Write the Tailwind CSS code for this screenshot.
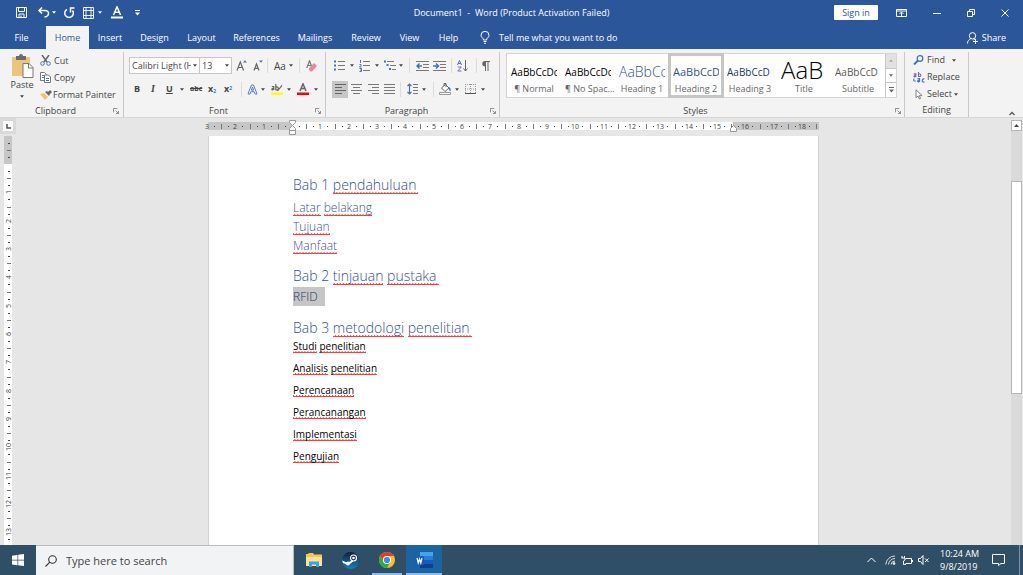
<!DOCTYPE html>
<html lang="en">
<head>
    <meta charset="UTF-8">
    <meta name="viewport" content="width=device-width, initial-scale=1.0">
    <script src="https://cdn.jsdelivr.net/npm/@tailwindcss/browser@4"></script>
    <title>Document1 - Word</title>
</head>
<body class="flex flex-col h-screen overflow-hidden bg-[#e6e6e6] font-['Open_Sans',sans-serif] text-[9px] leading-3 text-[#444]">
    <!-- Shared symbols -->
    <svg class="hidden">
        <symbol id="caret" viewBox="0 0 5 3"><path d="M0 0h5L2.500 3z" fill="currentColor"/></symbol>
        <symbol id="launcher" viewBox="0 0 7 7"><path d="M.5 5V.5H5M3 3l3 3M6.500 3.500v3h-3" fill="none" stroke="#777"/></symbol>
    </svg>

    <!-- Title bar -->
    <header class="grid grid-cols-[1fr_auto_1fr] items-center h-[25px] shrink-0 bg-[#2b579a] text-white">
        <div class="flex items-center pl-4">
            <button aria-label="Save" class="w-[22px]"><svg class="w-[11px] h-[11px]" viewBox="0 0 11 11" fill="none" stroke="#fff"><path d="M.5.5h10v10H.5zM2.500.5v4h6v-4M3 10.500v-3.500h5v3.500M5 8.500v1.500"/></svg></button>
            <button aria-label="Undo" class="w-[14px]"><svg class="w-3 h-[11px]" viewBox="0 0 12 11" fill="none" stroke="#fff" stroke-width="1.500"><path d="M4 .5L1 3.500l3 3M1 3.500h6c5 0 4.500 6-.5 6.500"/></svg></button>
            <svg class="w-1 h-[3px]"><use href="#caret"/></svg>
            <button aria-label="Redo" class="ml-[7px] w-[20px]"><svg class="w-[12px] h-[12px]" viewBox="0 0 12 12" fill="none" stroke="#fff" stroke-width="1.500"><path d="M4 2.300A4.300 4.300 0 1 0 9.500 3.500M11.500 1H7.500v4.500"/></svg></button>
            <button aria-label="Grid" class="w-[15px]"><svg class="w-[11px] h-[12px]" viewBox="0 0 11 12" fill="none" stroke="#fff" stroke-width=".9"><path d="M.5.5h10v11H.5zM3 0v12M8 0v12M0 3.500h11M0 8.500h11"/></svg></button>
            <svg class="w-1 h-[3px]"><use href="#caret"/></svg>
            <button aria-label="Font color" class="ml-[9px] w-[24px]"><svg class="w-3 h-[13px]" viewBox="0 0 12 13" fill="none" stroke="#fff"><path d="M2.500 9L6 .8 9.500 9M3.700 6.200h4.600" stroke-width="1.500"/><path d="M0 11.500h12" stroke-width="2"/></svg></button>
            <button aria-label="Customize toolbar"><svg class="w-[5px] h-[6px]" viewBox="0 0 5 6"><path d="M0 0h5v1H0zM0 2.500h5L2.500 5.500z" fill="#fff"/></svg></button>
        </div>
        <h1 class="whitespace-pre">Document1  -  Word (Product Activation Failed)</h1>
        <div class="flex items-center justify-end pr-[14px]">
            <button class="w-11 h-[15px] mr-[18px] rounded-[1px] bg-white text-[#2b579a]">Sign in</button>
            <button aria-label="Ribbon options" class="mr-[26px]"><svg class="w-[11px] h-2" viewBox="0 0 11 8" fill="none" stroke="#fff"><path d="M.5.5h10v7H.5zM.5 2h10M5.500 7V3.500M3.500 5l2-2 2 2"/></svg></button>
            <button aria-label="Minimize" class="mr-[26px]"><svg class="w-2 h-2" viewBox="0 0 8 8"><path d="M0 4.500h8" stroke="#fff"/></svg></button>
            <button aria-label="Restore" class="mr-[26px]"><svg class="w-2 h-2" viewBox="0 0 8 8" fill="none" stroke="#fff"><path d="M.5 2.500h5v5h-5zM2.500 2V.5h5v5H6"/></svg></button>
            <button aria-label="Close"><svg class="w-2 h-2" viewBox="0 0 8 8"><path d="M.5.5l7 7M7.500.5l-7 7" stroke="#fff"/></svg></button>
        </div>
    </header>

    <!-- Tabs -->
    <nav class="flex h-6 shrink-0 pt-px bg-[#2b579a] text-white">
        <button class="w-[46px] pr-[3px]">File</button>
        <button class="w-[43px] bg-[#f3f3f3] text-[#2b579a]">Home</button>
        <button class="w-[42px]">Insert</button>
        <button class="w-[47px]">Design</button>
        <button class="w-[47px]">Layout</button>
        <button class="w-[63px]">References</button>
        <button class="w-[54px]">Mailings</button>
        <button class="w-[48px]">Review</button>
        <button class="w-[39px]">View</button>
        <button class="w-[39px]">Help</button>
        <button class="flex items-center gap-[9px] ml-3">
            <svg class="w-[10px] h-[13px]" viewBox="0 0 10 13" fill="none" stroke="#fff"><path d="M3.500 9C3.500 7 1 6.500 1 4.300a4 4 0 0 1 8 0C9 6.500 6.500 7 6.500 9zM3.500 10.500h3M4 12.300h2"/></svg>
            Tell me what you want to do
        </button>
        <button class="flex items-center gap-1 ml-auto pr-[17px]">
            <svg class="w-[11px] h-[12px]" viewBox="0 0 11 12" fill="none" stroke="#fff"><circle cx="5.500" cy="3.800" r="3.200"/><path d="M.5 11.500c0-2.500 1.500-4 3.200-4.700M8 6.800l-1.500 1.500M6 9.500h5M8.500 7v5"/></svg>
            Share
        </button>
    </nav>

    <!-- Ribbon -->
    <section class="flex h-[69px] shrink-0 pt-[3px] border-b border-[#d5d5d5] bg-[#f3f3f3]">
        <!-- Clipboard -->
        <div class="flex flex-col w-[124px] border-r border-[#c8c8c8]">
            <div class="flex flex-1">
                <button class="flex flex-col items-center w-[26px] ml-[9px]">
                    <svg class="w-[23px] h-6 mt-[2px]" viewBox="0 0 23 24"><path d="M1 3h18v19H1z" fill="#ecc57c"/><path d="M5 2h3a2 2 0 0 1 4 0h3v4H5z" fill="#6b6b6b"/><path d="M12 9.500h6l4 4v10H12z" fill="#fff" stroke="#777"/><path d="M17.500 9.500v4.500H22" fill="none" stroke="#777"/></svg>
                    <span class="mt-px">Paste</span>
                    <svg class="w-1 h-[3px] mt-1"><use href="#caret"/></svg>
                </button>
                <div class="flex flex-col ml-[5px]">
                    <button class="flex items-center gap-[3px] h-[17px]">
                        <svg class="w-[11px] h-[11px]" viewBox="0 0 11 11" fill="none"><path d="M2 0l5 7M9 0L4 7" stroke="#666" stroke-width="1.500"/><circle cx="2.500" cy="8.500" r="1.800" stroke="#4472b8"/><circle cx="8.500" cy="8.500" r="1.800" stroke="#4472b8"/></svg>Cut
                    </button>
                    <button class="flex items-center gap-[3px] h-[17px]">
                        <svg class="w-[11px] h-[11px]" viewBox="0 0 11 11" fill="#fff" stroke="#777"><path d="M.5.5h4l2 2v6h-6z"/><path d="M4.500 3h4l2 2v5.500h-6z"/><path d="M2 3.500h2M2 5.500h2M6 6.500h3M6 8.500h3" stroke="#4472b8"/></svg>Copy
                    </button>
                    <button class="flex items-center gap-px h-[17px] whitespace-nowrap">
                        <svg class="w-3 h-[10px]" viewBox="0 0 12 10"><path d="M0 4l4-1 4 4-3 3z" fill="#ecc57c"/><path d="M5 2l4 4 1-2 2-2-2-2-2 2-1-1z" fill="#666"/></svg>Format Painter
                    </button>
                </div>
            </div>
            <div class="flex items-center h-[13px] pr-1"><span class="flex-1 text-center pr-[2px]">Clipboard</span><button aria-label="Clipboard settings"><svg class="w-[6px] h-[6px]"><use href="#launcher"/></svg></button></div>
        </div>
        <!-- Font -->
        <div class="flex flex-col w-[202px] border-r border-[#c8c8c8] pl-[5px]">
            <div class="flex items-center h-[27px]">
                <div class="relative">
                    <input aria-label="Font name" value="Calibri Light (H" class="w-[71px] h-[17px] pl-[2px] pr-[8px] border border-[#c6c6c6] bg-white">
                    <svg class="absolute right-[3px] top-[7px] w-1 h-[3px]"><use href="#caret"/></svg>
                </div>
                <div class="relative">
                    <input aria-label="Font size" value="13" class="w-8 h-[17px] pl-[2px] border border-l-0 border-[#c6c6c6] bg-white">
                    <svg class="absolute right-[3px] top-[7px] w-1 h-[3px]"><use href="#caret"/></svg>
                </div>
                <button aria-label="Grow font" class="ml-1 w-[17px]"><svg class="w-[11px] h-[11px]" viewBox="0 0 11 11" fill="none"><path d="M1 10.500L4.300 2l3.300 8.500M2.200 7.500h4.200" stroke="#666" stroke-width="1.200"/><path d="M7 2.500L9 .3l2 2.200z" fill="#4472b8"/></svg></button>
                <button aria-label="Shrink font" class="w-[14px]"><svg class="w-[10px] h-[11px]" viewBox="0 0 10 11" fill="none"><path d="M1 10.500l2.500-6.500L6 10.500M2 8.300h3" stroke="#666" stroke-width="1.200"/><path d="M6 .5h4L8 2.700z" fill="#4472b8"/></svg></button>
                <span class="w-px h-[15px] bg-[#dcdcdc] mr-[6px]"></span>
                <button class="flex items-center gap-[3px] text-[10px]">Aa<svg class="w-1 h-[3px]"><use href="#caret"/></svg></button>
                <span class="w-px h-[15px] bg-[#dcdcdc] mx-[6px]"></span>
                <button aria-label="Clear formatting"><svg class="w-[11px] h-3" viewBox="0 0 11 12"><path d="M.8 8L3.500.8 6.200 8M1.800 5.500h3.400" fill="none" stroke="#777" stroke-width="1.200"/><path d="M3 8l5-5 3 3-5 5.500H4.500L3 10z" fill="#e8899a"/></svg></button>
            </div>
            <div class="flex items-center h-5 pl-[5px]">
                <button class="w-[17px] text-left font-bold">B</button>
                <button class="w-[15px] text-left font-bold italic font-['Liberation_Serif',serif] text-[10px]">I</button>
                <button class="w-[14px] text-left font-bold underline">U</button>
                <svg class="w-1 h-[3px]"><use href="#caret"/></svg>
                <button class="ml-[6px] w-[18px] text-left line-through font-bold text-[7px]">abc</button>
                <button class="w-4 text-left font-bold">x<sub class="text-[5px] text-[#4472b8]">2</sub></button>
                <button class="w-3 text-left font-bold">x<sup class="text-[5px] text-[#4472b8]">2</sup></button>
                <span class="w-px h-[15px] bg-[#dcdcdc] mx-[5px]"></span>
                <button aria-label="Text effects" class="w-[14px]"><svg class="w-[11px] h-[11px]" viewBox="0 0 11 11"><path d="M1 10L4.500 1h2L10 10H8L7.200 7.700H3.800L3 10zM4.300 6.200h2.400L5.500 3z" fill="#fff" stroke="#4472b8" stroke-width=".9"/></svg></button>
                <svg class="w-1 h-[3px]"><use href="#caret"/></svg>
                <button aria-label="Highlight" class="ml-[6px] w-[16px]"><svg class="w-3 h-[13px]" viewBox="0 0 12 13"><path d="M0 9.500h12V12H0z" fill="#ff0"/><path d="M.8 3.500h2V7M2.800 5C.5 5 .5 7 1.500 7l1.300-.8M4.800 1v6h1c2 0 2-3.200 0-3.200h-1M6.500 8L11 2.300" fill="none" stroke="#666" stroke-width="1.200"/></svg></button>
                <svg class="w-1 h-[3px]"><use href="#caret"/></svg>
                <button aria-label="Font color" class="ml-[6px] w-[17px]"><svg class="w-3 h-[13px]" viewBox="0 0 12 13"><path d="M3 8L6 .8 9 8M4 5.500h4" fill="none" stroke="#666" stroke-width="1.500"/><path d="M0 9.500h12V12H0z" fill="#f00"/></svg></button>
                <svg class="w-1 h-[3px]"><use href="#caret"/></svg>
            </div>
            <div class="flex items-center h-[13px] mt-auto pr-1"><span class="flex-1 text-center pr-[7px]">Font</span><button aria-label="Font settings"><svg class="w-[6px] h-[6px]"><use href="#launcher"/></svg></button></div>
        </div>
        <!-- Paragraph -->
        <div class="flex flex-col w-[174px] border-r border-[#c8c8c8] pl-[6px]">
            <div class="flex items-center h-[27px] pl-[2px]">
                <button aria-label="Bullets" class="w-4"><svg class="w-[11px] h-[11px]" viewBox="0 0 11 11"><path d="M0 1.500h2M0 5.500h2M0 9.500h2" stroke="#4472b8" stroke-width="2"/><path d="M4 1.500h7M4 5.500h7M4 9.500h7" stroke="#777"/></svg></button>
                <svg class="w-1 h-[3px]"><use href="#caret"/></svg>
                <button aria-label="Numbering" class="ml-[5px] w-4"><svg class="w-[11px] h-[12px]" viewBox="0 0 11 12"><path d="M1.500 0v3M.5 4.500h1.500v1L.5 7h2M.5 8.500h2v3h-2M1 10h1.500" fill="none" stroke="#4472b8"/><path d="M4 1.500h7M4 5.500h7M4 10.500h7" stroke="#777"/></svg></button>
                <svg class="w-1 h-[3px]"><use href="#caret"/></svg>
                <button aria-label="Multilevel list" class="ml-[5px] w-[15px]"><svg class="w-3 h-[11px]" viewBox="0 0 12 11"><path d="M0 1.500h2M2.500 5h2M5 9h2" stroke="#4472b8" stroke-width="2"/><path d="M3 1.500h7M6 5.500h6M8 9.500h4" stroke="#777"/></svg></button>
                <svg class="w-1 h-[3px]"><use href="#caret"/></svg>
                <span class="w-px h-[15px] bg-[#dcdcdc] mx-[6px]"></span>
                <button aria-label="Decrease indent" class="w-[17px]"><svg class="w-[13px] h-[10px]" viewBox="0 0 13 10"><path d="M0 .5h13M7 3.500h6M7 6.500h6M0 9.500h13" stroke="#777"/><path d="M6 5H1.500M3.500 2.500L1 5l2.500 2.500" fill="none" stroke="#4472b8" stroke-width="1.500"/></svg></button>
                <button aria-label="Increase indent" class="w-[13px]"><svg class="w-[13px] h-[10px]" viewBox="0 0 13 10"><path d="M0 .5h13M7 3.500h6M7 6.500h6M0 9.500h13" stroke="#777"/><path d="M0 5h4.500M3 2.500L5.500 5 3 7.500" fill="none" stroke="#4472b8" stroke-width="1.500"/></svg></button>
                <span class="w-px h-[15px] bg-[#dcdcdc] mx-[5px]"></span>
                <button aria-label="Sort" class="w-[14px]"><svg class="w-3 h-3" viewBox="0 0 12 12" fill="none"><path d="M.5 5L2.500.5 4.500 5M1.200 3.500h2.600" stroke="#4472b8"/><path d="M.8 7h3.500L.8 11h3.700" stroke="#8764b8"/><path d="M8.500 0v11M6.500 8.500l2 2.500 2-2.500" stroke="#666"/></svg></button>
                <span class="w-px h-[15px] bg-[#dcdcdc] mx-[5px]"></span>
                <button aria-label="Show marks"><svg class="w-2 h-[10px]" viewBox="0 0 8 10"><path d="M8 0H3a2.600 2.600 0 0 0 0 5.400V10h1V1h1.500v9h1V1H8z" fill="#666"/></svg></button>
            </div>
            <div class="flex items-center h-5">
                <button aria-label="Align left" class="flex items-center justify-center w-4 h-[17px] bg-[#c6c6c6]"><svg class="w-[11px] h-[10px]" viewBox="0 0 11 10"><path d="M0 .5h11M0 3.500h7M0 6.500h11M0 9.500h7" stroke="#666"/></svg></button>
                <button aria-label="Center" class="flex justify-center w-[17px]"><svg class="w-[11px] h-[10px]" viewBox="0 0 11 10"><path d="M0 .5h11M2 3.500h7M0 6.500h11M2 9.500h7" stroke="#777"/></svg></button>
                <button aria-label="Align right" class="flex justify-center w-4"><svg class="w-[11px] h-[10px]" viewBox="0 0 11 10"><path d="M0 .5h11M4 3.500h7M0 6.500h11M4 9.500h7" stroke="#777"/></svg></button>
                <button aria-label="Justify" class="flex justify-center w-4"><svg class="w-[11px] h-[10px]" viewBox="0 0 11 10"><path d="M0 .5h11M0 3.500h11M0 6.500h11M0 9.500h11" stroke="#777"/></svg></button>
                <span class="w-px h-[15px] bg-[#dcdcdc] ml-[3px] mr-[6px]"></span>
                <button aria-label="Line spacing" class="w-[15px]"><svg class="w-[11px] h-3" viewBox="0 0 11 12" fill="none"><path d="M2.500 1v10M.5 3l2-2 2 2M.5 9l2 2 2-2" stroke="#4472b8" stroke-width="1.200"/><path d="M6 1.500h5M6 4.500h5M6 7.500h5M6 10.500h5" stroke="#777"/></svg></button>
                <svg class="w-1 h-[3px]"><use href="#caret"/></svg>
                <span class="w-px h-[15px] bg-[#dcdcdc] ml-[7px] mr-[5px]"></span>
                <button aria-label="Shading" class="w-4"><svg class="w-3 h-3" viewBox="0 0 12 12" fill="none"><path d="M2.500 5l4-3.500L10 5 6 8.500zM5 3V.5h2V4" fill="#fff" stroke="#666"/><path d="M9.500 4c2 .5 2.500 2 2 4.500L10 7z" fill="#4472b8"/><path d="M.5 9.500h11v2H.5z" fill="#fff" stroke="#999"/></svg></button>
                <svg class="w-1 h-[3px]"><use href="#caret"/></svg>
                <button aria-label="Borders" class="ml-[6px] w-4"><svg class="w-[11px] h-[10px]" viewBox="0 0 11 10" fill="none"><path d="M.5 0v10M5.500 0v10M10.500 0v10M0 .5h11M0 5h11" stroke="#999" stroke-dasharray="1 1"/><path d="M0 9.500h11" stroke="#555"/></svg></button>
                <svg class="w-1 h-[3px]"><use href="#caret"/></svg>
            </div>
            <div class="flex items-center h-[13px] mt-auto pr-[3px]"><span class="flex-1 text-center pr-[9px]">Paragraph</span><button aria-label="Paragraph settings"><svg class="w-[6px] h-[6px]"><use href="#launcher"/></svg></button></div>
        </div>
        <!-- Styles -->
        <div class="flex flex-col w-[405px] border-r border-[#c8c8c8] pl-[6px]">
            <div class="flex w-[391px] h-[45px] mt-px border border-[#d5d5d5] bg-white text-[#666] whitespace-nowrap">
                <button class="w-[54px] px-1"><span class="flex items-center h-[27px] pt-1 overflow-hidden text-[10px] text-black">AaBbCcDc</span>¶ Normal</button>
                <button class="w-[54px] px-1"><span class="flex items-center h-[27px] pt-1 overflow-hidden text-[10px] text-black">AaBbCcDc</span>¶ No Spac...</button>
                <button class="w-[54px] px-1"><span class="flex items-center h-[27px] pt-1 overflow-hidden text-[14px] text-[#2f5496] font-light">AaBbCc</span>Heading 1</button>
                <button class="w-[54px] outline-3 -outline-offset-2 outline-[#c6c6c6] px-1"><span class="flex items-center h-[27px] pt-1 overflow-hidden text-[11px] text-[#2f5496]">AaBbCcD</span>Heading 2</button>
                <button class="w-[54px] px-1"><span class="flex items-center h-[27px] pt-1 overflow-hidden text-[10px] text-[#1f3763]">AaBbCcD</span>Heading 3</button>
                <button class="w-[54px] px-1"><span class="flex items-center h-[27px] overflow-hidden text-[24px] leading-[27px] text-black font-light">AaB</span>Title</button>
                <button class="w-[54px] px-1"><span class="flex items-center h-[27px] pt-1 overflow-hidden text-[10px] text-[#5a5a5a]">AaBbCcD</span>Subtitle</button>
                <div class="flex flex-col flex-1 border-l border-[#c6c6c6]">
                    <button aria-label="Styles up" class="flex items-center justify-center flex-1 bg-[#e1e1e1] text-[#aaa]"><svg class="w-1 h-[3px] rotate-180"><use href="#caret"/></svg></button>
                    <button aria-label="Styles down" class="flex items-center justify-center flex-1 border-y border-[#c6c6c6]"><svg class="w-1 h-[3px]"><use href="#caret"/></svg></button>
                    <button aria-label="More styles" class="flex items-center justify-center flex-1"><svg class="w-[5px] h-[6px]" viewBox="0 0 5 6"><path d="M0 0h5v1H0zM0 2.500h5L2.500 5.500z" fill="#666"/></svg></button>
                </div>
            </div>
            <div class="flex items-center h-[13px] mt-auto pr-[3px]"><span class="flex-1 text-center pr-[10px]">Styles</span><button aria-label="Styles settings"><svg class="w-[6px] h-[6px]"><use href="#launcher"/></svg></button></div>
        </div>
        <!-- Editing -->
        <div class="flex flex-col w-[64px] border-r border-[#c8c8c8] pl-2">
            <div class="flex flex-col pt-px">
                <button class="flex items-center gap-[3px] h-[14px]"><svg class="w-[11px] h-[10px]" viewBox="0 0 11 10" fill="none" stroke="#4472b8"><circle cx="7" cy="3.500" r="2.800" stroke-width="1.300"/><path d="M5 5.500L1 9.500" stroke-width="2"/></svg>Find<svg class="w-1 h-[3px] ml-1"><use href="#caret"/></svg></button>
                <button class="flex items-center gap-[2px] h-[20px]"><svg class="w-3 h-[11px]" viewBox="0 0 12 11" fill="none"><path d="M.8 1.800h2V5M2.800 3.200c-2.200 0-2.200 1.800-1 1.800l1-.8M5.500 0v4.500h1.200c1.500 0 1.500-2.500 0-2.500H5.500" stroke="#8764b8" stroke-width="1.200"/><path d="M4.500 6.700h2V10M6.500 8c-2.200 0-2.200 2-1 2l1-.8M11.500 7C8.500 6 8.500 11 11.500 10" stroke="#4472b8" stroke-width="1.200"/><path d="M.8 6.500v2.500h2" stroke="#4472b8"/></svg>Replace</button>
                <button class="flex items-center gap-1 h-[14px] pl-[2px]"><svg class="w-2 h-[11px]" viewBox="0 0 8 11"><path d="M1 .8v8l2-1.800 1.300 3 1.200-.5L4.300 6.600h2.800z" fill="#fff" stroke="#777" stroke-width=".9"/></svg>Select<svg class="w-1 h-[3px] -ml-[2px]"><use href="#caret"/></svg></button>
            </div>
            <span class="h-[13px] mt-auto text-center pr-[8px]">Editing</span>
        </div>
        <button aria-label="Collapse ribbon" class="ml-auto mt-auto mb-px mr-2"><svg class="w-[6px] h-[5px]" viewBox="0 0 6 5"><path d="M.5 4L3 1.500 5.500 4" fill="none" stroke="#555" stroke-width="1.300"/></svg></button>
    </section>

    <!-- Work area -->
    <main class="flex flex-1 min-h-0">
        <div class="flex flex-col w-4 shrink-0">
            <button aria-label="Tab stop" class="flex items-center justify-center w-4 h-4 mb-[2px] border-3 border-[#d9d9d9] bg-white"><svg class="w-[5px] h-[5px]" viewBox="0 0 5 5"><path d="M1 0v4h4" fill="none" stroke="#555" stroke-width="1.500"/></svg></button>
            <svg id="vRuler" class="flex-1 w-4 text-[7px]" fill="#444"></svg>
        </div>
        <div class="flex flex-col items-center flex-1 min-w-0">
            <svg id="hRuler" class="w-[611px] h-[18px] shrink-0 overflow-visible text-[7px]" fill="#444"></svg>
            <article class="flex-1 min-h-0 w-[611px] pt-[39px] px-[84px] border-x border-[#d0d0d0] bg-white overflow-hidden text-[10px] leading-4 text-black">
                <h2 class="text-[14px] leading-5 font-light text-[#2f5496]">Bab 1 <u class="pr-[2px] no-underline bg-[conic-gradient(from_135deg_at_50%_0,#ff3b3b_90deg,transparent_0)] bg-[size:3px_2px] bg-repeat-x bg-bottom">pendahuluan</u></h2>
                <h3 class="mt-[3px] text-[12px] leading-[19px] font-light text-[#2f5496]"><u class="no-underline bg-[conic-gradient(from_135deg_at_50%_0,#ff3b3b_90deg,transparent_0)] bg-[size:3px_2px] bg-repeat-x bg-bottom">Latar</u> <u class="no-underline bg-[conic-gradient(from_135deg_at_50%_0,#ff3b3b_90deg,transparent_0)] bg-[size:3px_2px] bg-repeat-x bg-bottom">belakang</u></h3>
                <h3 class="text-[12px] leading-[19px] font-light text-[#2f5496]"><u class="no-underline bg-[conic-gradient(from_135deg_at_50%_0,#ff3b3b_90deg,transparent_0)] bg-[size:3px_2px] bg-repeat-x bg-bottom">Tujuan</u></h3>
                <h3 class="text-[12px] leading-[19px] font-light text-[#2f5496]"><u class="no-underline bg-[conic-gradient(from_135deg_at_50%_0,#ff3b3b_90deg,transparent_0)] bg-[size:3px_2px] bg-repeat-x bg-bottom">Manfaat</u></h3>
                <h2 class="mt-[11px] text-[14px] leading-5 font-light text-[#2f5496]">Bab 2 <u class="no-underline bg-[conic-gradient(from_135deg_at_50%_0,#ff3b3b_90deg,transparent_0)] bg-[size:3px_2px] bg-repeat-x bg-bottom">tinjauan</u> <u class="pr-[2px] no-underline bg-[conic-gradient(from_135deg_at_50%_0,#ff3b3b_90deg,transparent_0)] bg-[size:3px_2px] bg-repeat-x bg-bottom">pustaka</u></h2>
                <h3 class="mt-px w-fit pr-[7px] bg-[#c6c6c6] text-[12px] leading-[19px] font-light text-[#1f3763]">RFID</h3>
                <h2 class="mt-3 text-[14px] leading-5 font-light text-[#2f5496]">Bab 3 <u class="no-underline bg-[conic-gradient(from_135deg_at_50%_0,#ff3b3b_90deg,transparent_0)] bg-[size:3px_2px] bg-repeat-x bg-bottom">metodologi</u> <u class="pr-[2px] no-underline bg-[conic-gradient(from_135deg_at_50%_0,#ff3b3b_90deg,transparent_0)] bg-[size:3px_2px] bg-repeat-x bg-bottom">penelitian</u></h2>
                <p class="mb-[6px]"><u class="no-underline bg-[conic-gradient(from_135deg_at_50%_0,#ff3b3b_90deg,transparent_0)] bg-[size:3px_2px] bg-repeat-x bg-bottom">Studi</u> <u class="no-underline bg-[conic-gradient(from_135deg_at_50%_0,#ff3b3b_90deg,transparent_0)] bg-[size:3px_2px] bg-repeat-x bg-bottom">penelitian</u></p>
                <p class="mb-[6px]"><u class="no-underline bg-[conic-gradient(from_135deg_at_50%_0,#ff3b3b_90deg,transparent_0)] bg-[size:3px_2px] bg-repeat-x bg-bottom">Analisis</u> <u class="no-underline bg-[conic-gradient(from_135deg_at_50%_0,#ff3b3b_90deg,transparent_0)] bg-[size:3px_2px] bg-repeat-x bg-bottom">penelitian</u></p>
                <p class="mb-[6px]"><u class="no-underline bg-[conic-gradient(from_135deg_at_50%_0,#ff3b3b_90deg,transparent_0)] bg-[size:3px_2px] bg-repeat-x bg-bottom">Perencanaan</u></p>
                <p class="mb-[6px]"><u class="no-underline bg-[conic-gradient(from_135deg_at_50%_0,#ff3b3b_90deg,transparent_0)] bg-[size:3px_2px] bg-repeat-x bg-bottom">Perancanangan</u></p>
                <p class="mb-[6px]"><u class="no-underline bg-[conic-gradient(from_135deg_at_50%_0,#ff3b3b_90deg,transparent_0)] bg-[size:3px_2px] bg-repeat-x bg-bottom">Implementasi</u></p>
                <p><u class="no-underline bg-[conic-gradient(from_135deg_at_50%_0,#ff3b3b_90deg,transparent_0)] bg-[size:3px_2px] bg-repeat-x bg-bottom">Pengujian</u></p>
            </article>
        </div>
        <!-- Scrollbar -->
        <div class="flex flex-col w-[11px] shrink-0 mt-[2px] mr-px bg-[#dadada]">
            <button aria-label="Scroll up" class="flex items-center justify-center h-[11px] border border-[#b5b5b5] bg-white"><svg class="w-[5px] h-[3px] rotate-180"><use href="#caret"/></svg></button>
            <div class="h-[50%] mt-[50px] border border-[#b5b5b5] bg-white"></div>
        </div>
    </main>

    <!-- Taskbar -->
    <footer class="flex h-[30px] shrink-0 bg-[#2f4f66] text-white">
        <button aria-label="Start" class="flex items-center justify-center w-9"><svg class="w-3 h-3" viewBox="0 0 12 12" fill="#fff"><path d="M0 1.700l5.500-.8v4.800H0zM6.200.8L12 0v5.700H6.200zM0 6.400h5.500v4.800L0 10.400zM6.200 6.400H12V12l-5.800-.8z"/></svg></button>
        <label class="flex items-center gap-[9px] w-[258px] pl-[9px] border border-l-0 border-[#bbb] border-b-0 bg-[#f2f3f5] text-[#333]">
            <svg class="w-3 h-3" viewBox="0 0 12 12" fill="none" stroke="#333" stroke-width="1.100"><circle cx="7.500" cy="4.500" r="3.800"/><path d="M4.800 7.200L.5 11.500"/></svg>
            <input aria-label="Search" placeholder="Type here to search" class="flex-1 h-full text-[11px] placeholder:text-[#444] outline-none">
        </label>
        <button aria-label="File Explorer" class="flex items-center justify-center w-[37px] ml-[1px]"><svg class="w-4 h-[14px]" viewBox="0 0 16 14"><path d="M0 1h2l1-1h4l1 1.500h8V13H0z" fill="#f5c944"/><path d="M0 4h16v9H0z" fill="#fde39a"/><path d="M3 14V8.500h10V14h-3v-2.500H6V14z" fill="#36a3e6"/></svg></button>
        <button aria-label="Steam" class="flex items-center justify-center w-[37px]"><svg class="w-[17px] h-[17px]" viewBox="0 0 17 17"><defs><linearGradient id="steam" x2="0" y2="1"><stop stop-color="#111d3a"/><stop offset="1" stop-color="#1584be"/></linearGradient></defs><circle cx="8.500" cy="8.500" r="8.500" fill="url(#steam)"/><path d="M0 8.500l5.500 2.300 3-1.500L11 5.500l2.500 2L9.500 11 6 13 1 11z" fill="#fff"/><circle cx="11.500" cy="6" r="3" fill="#15284a" stroke="#fff" stroke-width="1.200"/><circle cx="11.500" cy="6" r="1.300" fill="#fff"/><circle cx="6" cy="11.500" r="1.900" fill="#fff"/></svg></button>
        <button aria-label="Chrome" class="flex items-center justify-center w-[30px] ml-[3px] mr-[4px] border-b-2 border-[#8cbdea]"><svg class="w-4 h-4 mt-[2px]" viewBox="0 0 16 16"><circle cx="8" cy="8" r="8" fill="#fbc116"/><path d="M1.100 4A8 8 0 0 1 14.900 4H8a4 4 0 0 0-3.500 6z" fill="#e33b2e"/><path d="M1.100 4A8 8 0 0 0 8 16l3.500-6a4 4 0 0 1-7 0z" fill="#2da94f"/><circle cx="8" cy="8" r="4" fill="#fff"/><circle cx="8" cy="8" r="3.100" fill="#4285f4"/></svg></button>
        <button aria-label="Word" class="flex items-center justify-center w-9 bg-[#1a64a0] border-b-2 border-[#8cbdea]"><svg class="w-[18px] h-4 mt-[2px]" viewBox="0 0 18 16"><path d="M5 0h13v4H5z" fill="#41a5ee"/><path d="M5 4h13v4H5z" fill="#2b7cd3"/><path d="M5 8h13v4H5z" fill="#185abd"/><path d="M5 12h13v4H5z" fill="#103f91"/><path d="M0 4h9v9H0z" fill="#185abd"/><path d="M2 6l1.200 5L4.500 7l1.300 4L7 6" fill="none" stroke="#fff" stroke-width="1.200"/></svg></button>
        <div class="flex items-center ml-auto">
            <button aria-label="Show hidden icons" class="w-[18px]"><svg class="w-[9px] h-[6px]" viewBox="0 0 9 6"><path d="M.5 5l4-4 4 4" fill="none" stroke="#fff"/></svg></button>
            <svg class="w-[11px] h-[10px] mr-[5px]" viewBox="0 0 11 10" fill="none" stroke="#ddd"><path d="M.8 9.500A9 9 0 0 1 10 1M3.500 9.500A6.500 6.500 0 0 1 10 3.500M6 9.500A4 4 0 0 1 10 6"/><circle cx="9" cy="8.500" r="1" fill="#fff"/></svg>
            <svg class="w-3 h-[9px] mr-[5px]" viewBox="0 0 12 9" fill="none" stroke="#fff"><path d="M4.500 2.500h6v5h-6M11.500 4v2M1 0v2M3.500 0v2M.5 2h3.500v2L2.500 5v3.500H5"/></svg>
            <svg class="w-[11px] h-[10px] mr-[11px]" viewBox="0 0 11 10" fill="none" stroke="#fff"><path d="M.5 3.500h2l2.500-3v9l-2.500-3h-2zM7 3.500l3.500 3.500M10.500 3.500L7 7"/></svg>
            <div class="w-[37px] mr-[15px] text-center leading-[13px] whitespace-nowrap">10:24 AM<br>9/8/2019</div>
            <button aria-label="Notifications" class="w-[27px]"><svg class="w-[13px] h-3" viewBox="0 0 13 12"><path d="M.5.5h12v9H9l-2.500 2v-2h-6z" fill="none" stroke="#fff"/></svg></button>
            <span class="w-px h-full mr-[3px] bg-[#7d919f]"></span>
        </div>
    </footer>

    <script>
        const CM = 85 / 3; // one centimetre on both rulers

        // a number every cm, a line at the half and dots at the quarters
        function marks(from, to, place) {
            let out = "";
            for (let q = from * 4; q <= to * 4; q++) {
                const pos = Math.round(q * CM / 4);
                if (q % 4 === 0) out += q ? place(pos, "n", Math.abs(q / 4)) : "";
                else out += place(pos, q % 2 === 0 ? "l" : "d");
            }
            return out;
        }

        document.getElementById("hRuler").innerHTML = `
            <rect y="4" width="611" height="8" fill="#fff"/>
            <rect y="4" width="85" height="8" fill="#c6c6c6"/>
            <rect x="525" y="4" width="86" height="8" fill="#c6c6c6"/>
            ` + marks(-3, 18.5, (p, kind, n) => {
                const x = 84 + p;
                if (kind === "n") return `<text x="${x}" y="11" text-anchor="middle">${n}</text>`;
                return kind === "l" ? `<rect x="${x}" y="6" width="1" height="5" fill="#777"/>` : `<rect x="${x}" y="8" width="1" height="1"/>`;
            }) + `
            <path d="M81.500 2.500h6v2l-3 3-3-3zM81.500 12.500v-2l3-3 3 3v2zM81.500 12.500h6v4h-6z" fill="#fff" stroke="#999"/>
            <path d="M522.500 13.500v-3l3-3 3 3v3z" fill="#fff" stroke="#999"/>`;

        document.getElementById("vRuler").innerHTML = `
            <rect x="4" width="8" height="100%" fill="#fff"/>
            <rect x="4" width="8" height="28" fill="#c6c6c6"/>
            ` + marks(-0.75, 13.5, (p, kind, n) => {
                const y = 28 + p;
                if (kind === "n") return `<text transform="translate(11 ${y}) rotate(-90)" text-anchor="middle">${n}</text>`;
                return kind === "l" ? `<rect x="7" y="${y}" width="4" height="1" fill="#777"/>` : `<rect x="8" y="${y}" width="2" height="1"/>`;
            });
    </script>
</body>
</html>
